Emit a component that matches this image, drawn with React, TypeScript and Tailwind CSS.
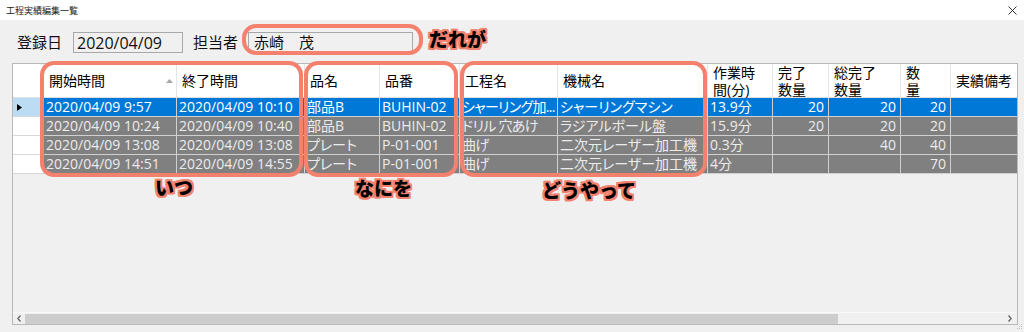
import React from "react";

type Row = {
  start: string;
  end: string;
  name: string;
  no: string;
  proc: string;
  mach: string;
  time: string;
  done: string;
  total: string;
  qty: string;
  note: string;
};

type Col = {
  key: keyof Row;
  label: string[];
  w: string;
  right?: boolean;
  sort?: boolean;
  tight?: boolean;
};

const cols: Col[] = [
  { key: "start", label: ["開始時間"], w: "w-[133px]", sort: true },
  { key: "end", label: ["終了時間"], w: "w-[128px]" },
  { key: "name", label: ["品名"], w: "w-[75px]" },
  { key: "no", label: ["品番"], w: "w-[80px]" },
  { key: "proc", label: ["工程名"], w: "w-[98px]", tight: true },
  { key: "mach", label: ["機械名"], w: "w-[150px]" },
  { key: "time", label: ["作業時", "間(分)"], w: "w-[65px]" },
  { key: "done", label: ["完了", "数量"], w: "w-[56px]", right: true },
  { key: "total", label: ["総完了", "数量"], w: "w-[72px]", right: true },
  { key: "qty", label: ["数", "量"], w: "w-[50px]", right: true },
  { key: "note", label: ["実績備考"], w: "w-[90px]" },
];

const rows: Row[] = [
  { start: "2020/04/09 9:57", end: "2020/04/09 10:10", name: "部品B", no: "BUHIN-02", proc: "シャーリング加...", mach: "シャーリングマシン", time: "13.9分", done: "20", total: "20", qty: "20", note: "" },
  { start: "2020/04/09 10:24", end: "2020/04/09 10:40", name: "部品B", no: "BUHIN-02", proc: "ドリル 穴あけ", mach: "ラジアルボール盤", time: "15.9分", done: "20", total: "20", qty: "20", note: "" },
  { start: "2020/04/09 13:08", end: "2020/04/09 13:08", name: "プレート", no: "P-01-001", proc: "曲げ", mach: " 二次元レーザー加工機", time: "0.3分", done: "", total: "40", qty: "40", note: "" },
  { start: "2020/04/09 14:51", end: "2020/04/09 14:55", name: "プレート", no: "P-01-001", proc: "曲げ", mach: " 二次元レーザー加工機", time: "4分", done: "", total: "", qty: "70", note: "" },
];

// 注釈の文字（黒＋サーモンの縁取り）
const noteText =
  "absolute font-black text-[19px] leading-none text-black whitespace-nowrap [text-shadow:2px_0_0_#f3816e,-2px_0_0_#f3816e,0_2px_0_#f3816e,0_-2px_0_#f3816e,2px_2px_0_#f3816e,-2px_-2px_0_#f3816e,2px_-2px_0_#f3816e,-2px_2px_0_#f3816e]";

function GridHeader() {
  return (
    <div className="flex h-[34px] shrink-0 border-b border-[#e0e0e0] bg-white">
      <div className="w-[31px] shrink-0 border-r border-[#e0e0e0]" />
      {cols.map((c) => (
        <div
          key={c.key}
          className={`${c.w} relative flex shrink-0 items-center border-r border-[#e5e5e5] pl-[5px] text-[14px] leading-[17px] text-black`}
        >
          <div className="whitespace-nowrap">
            {c.label.map((l) => (
              <div key={l}>{l}</div>
            ))}
          </div>
          {c.sort && (
            <svg className="absolute right-[3px] top-[15px]" width="7" height="4" viewBox="0 0 7 4">
              <path d="M0 4 L3.5 0 L7 4 Z" fill="#a8a8a8" />
            </svg>
          )}
        </div>
      ))}
    </div>
  );
}

function GridRow({ row, selected }: { row: Row; selected: boolean }) {
  return (
    <div className="flex h-[19px] shrink-0">
      <div
        className={`flex w-[31px] shrink-0 items-center border-r border-b border-[#d8d8d8] pl-[4px] ${
          selected ? "bg-[#bcdcf4]" : "bg-white"
        }`}
      >
        {selected && (
          <svg width="5" height="7" viewBox="0 0 5 7">
            <path d="M0 0 L5 3.5 L0 7 Z" fill="#000" />
          </svg>
        )}
      </div>
      {cols.map((c) => (
        <div
          key={c.key}
          className={`${c.w} shrink-0 overflow-hidden whitespace-nowrap border-r border-b border-[#d0d0d0] px-[2px] text-[14px] leading-[18px] [font-feature-settings:'palt'] ${
            c.tight ? "tracking-[-0.7px]" : ""
          } ${c.right ? "text-right pr-[4px]" : ""} ${
            selected ? "bg-[#0078d7] text-white" : "bg-[#808080] text-[#ececec]"
          }`}
        >
          {row[c.key]}
        </div>
      ))}
    </div>
  );
}

function HScroll() {
  return (
    <div className="flex h-[12px] shrink-0 items-center border-t border-[#f8f8f8] bg-[#f0f0f0]">
      <div className="flex w-[12px] shrink-0 items-center justify-center">
        <svg width="4" height="7" viewBox="0 0 4 7">
          <path d="M3.5 0.5 L0.8 3.5 L3.5 6.5" stroke="#606060" strokeWidth="1.2" fill="none" />
        </svg>
      </div>
      <div className="h-[10px] w-[813px] shrink-0 bg-[#cdcdcd]" />
      <div className="flex-1" />
      <div className="flex w-[14px] shrink-0 items-center justify-center">
        <svg width="4" height="7" viewBox="0 0 4 7">
          <path d="M0.5 0.5 L3.2 3.5 L0.5 6.5" stroke="#606060" strokeWidth="1.2" fill="none" />
        </svg>
      </div>
    </div>
  );
}

export default function App() {
  return (
    <div className="relative h-[332px] w-[1024px] overflow-hidden bg-[#f0f0f0] font-['Open_Sans','Noto_Sans_CJK_JP',sans-serif] text-[#111]">
      {/* タイトルバー */}
      <div className="flex h-[20px] items-center justify-between bg-white pl-[6px] pr-[6px]">
        <span className="font-['Noto_Sans_CJK_JP',sans-serif] text-[9px] leading-none text-[#222]">工程実績編集一覧</span>
        <svg width="9" height="9" viewBox="0 0 9 9" className="mr-[1px]">
          <path d="M0.5 0.5 L8.5 8.5 M8.5 0.5 L0.5 8.5" stroke="#333" strokeWidth="1" />
        </svg>
      </div>

      {/* 登録日・担当者 */}
      <div className="mt-[12px] flex h-[21px] items-center">
        <span className="ml-[17px] w-[56px] text-[15px] leading-none">登録日</span>
        <div className="flex h-[21px] w-[110px] items-center border border-[#a8a8a8] pl-[3px] text-[16px] leading-none">
          2020/04/09
        </div>
        <span className="ml-[10px] w-[55px] text-[15px] leading-none">担当者</span>
        <div className="flex h-[21px] w-[165px] items-center border border-[#a8a8a8] pl-[5px] text-[15px] leading-none">
          赤崎　茂
        </div>
      </div>

      {/* 一覧グリッド */}
      <div className="ml-[12px] mt-[10px] flex h-[262px] w-[1006px] flex-col overflow-hidden border border-[#b8b8b8] bg-[#f0f0f0]">
        <GridHeader />
        {rows.map((r, i) => (
          <GridRow key={i} row={r} selected={i === 0} />
        ))}
        <div className="flex-1" />
        <HScroll />
      </div>

      {/* サイズ変更グリップ */}
      <svg className="absolute right-[1px] bottom-[2px]" width="6" height="6" viewBox="0 0 6 6">
        <rect x="4" y="0" width="1" height="1" fill="#bdbdbd" />
        <rect x="2" y="2" width="1" height="1" fill="#bdbdbd" />
        <rect x="4" y="2" width="1" height="1" fill="#bdbdbd" />
        <rect x="0" y="4" width="1" height="1" fill="#bdbdbd" />
        <rect x="2" y="4" width="1" height="1" fill="#bdbdbd" />
        <rect x="4" y="4" width="1" height="1" fill="#bdbdbd" />
      </svg>

      {/* 注釈 */}
      <div className="absolute left-[242px] top-[24px] h-[31px] w-[181px] rounded-[14px] border-4 border-[#f3816e]" />
      <div className="absolute left-[40px] top-[61px] h-[116px] w-[263px] rounded-[14px] border-4 border-[#f3816e]" />
      <div className="absolute left-[304px] top-[61px] h-[116px] w-[154px] rounded-[14px] border-4 border-[#f3816e]" />
      <div className="absolute left-[460px] top-[61px] h-[116px] w-[247px] rounded-[14px] border-4 border-[#f3816e]" />
      <span className={`${noteText} left-[429px] top-[31px]`}>だれが</span>
      <span className={`${noteText} left-[155px] top-[179px]`}>いつ</span>
      <span className={`${noteText} left-[355px] top-[180px]`}>なにを</span>
      <span className={`${noteText} left-[542px] top-[182px]`}>どうやって</span>
    </div>
  );
}
